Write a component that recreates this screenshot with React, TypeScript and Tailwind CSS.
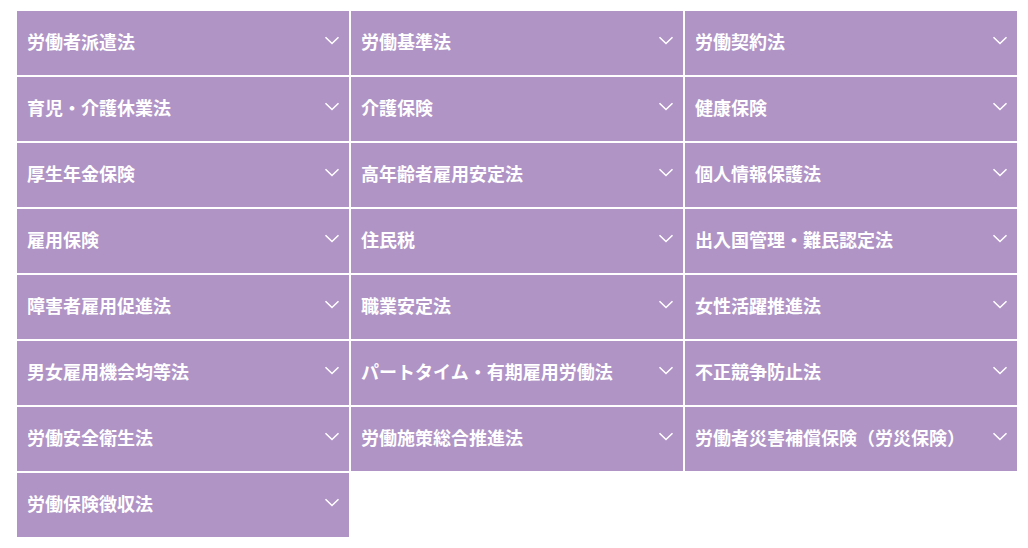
const items = [
  '労働者派遣法',
  '労働基準法',
  '労働契約法',
  '育児・介護休業法',
  '介護保険',
  '健康保険',
  '厚生年金保険',
  '高年齢者雇用安定法',
  '個人情報保護法',
  '雇用保険',
  '住民税',
  '出入国管理・難民認定法',
  '障害者雇用促進法',
  '職業安定法',
  '女性活躍推進法',
  '男女雇用機会均等法',
  'パートタイム・有期雇用労働法',
  '不正競争防止法',
  '労働安全衛生法',
  '労働施策総合推進法',
  '労働者災害補償保険（労災保険）',
  '労働保険徴収法',
]

function Chevron() {
  return (
    <svg width="16" height="9" viewBox="0 0 16 9" fill="none" stroke="currentColor" strokeWidth={1.6} className="shrink-0">
      <path d="M1.5 1.2l6.5 6.3 6.5-6.3" />
    </svg>
  )
}

export default function App() {
  return (
    <div className="w-[1028px] h-[548px] bg-white pt-[11px] pl-[17px]" style={{ fontFamily: '"Noto Sans CJK JP", "Noto Sans", sans-serif' }}>
      <div className="grid grid-cols-[332px_332px_332px] gap-[2px]">
        {items.map((name) => (
          <button
            key={name}
            className="h-[64px] bg-[#b094c6] text-white flex items-center justify-between pl-[10px] pr-[9px] pb-[5px] text-left"
          >
            <span className="text-[18px] font-bold leading-none">{name}</span>
            <Chevron />
          </button>
        ))}
      </div>
    </div>
  )
}
